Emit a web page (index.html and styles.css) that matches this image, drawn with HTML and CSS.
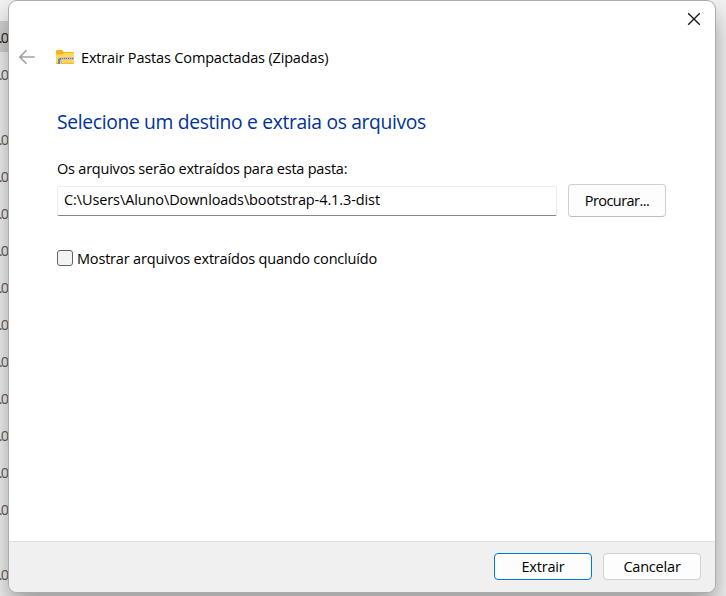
FILE: index.html
```html
<!DOCTYPE html>
<html lang="pt-BR">
<head>
<meta charset="utf-8">
<title>Extrair Pastas Compactadas (Zipadas)</title>
<link rel="stylesheet" href="styles.css">
</head>
<body>
<div class="backdrop">
  <div class="row selected">.0</div>
  <div class="row group-end">.0</div>
  <div class="row">.0</div>
  <div class="row">.0</div>
  <div class="row">.0</div>
  <div class="row">.0</div>
  <div class="row">.0</div>
  <div class="row">.0</div>
  <div class="row">.0</div>
  <div class="row">.0</div>
  <div class="row">.0</div>
  <div class="row">.0</div>
  <div class="row group-end">.0</div>
  <div class="row">.0</div>
</div>
<main class="dialog">
  <div class="titlebar">
    <svg class="close" width="14" height="14" viewBox="0 0 14 14"><path d="M1.2 1.2L12.8 12.8M12.8 1.2L1.2 12.8"/></svg>
  </div>
  <header class="header">
    <svg class="back" width="16" height="16" viewBox="0 0 16 16"><path d="M15.7 8H1M7.5 1.3L.9 8l6.6 6.7"/></svg>
    <svg class="folder" width="18" height="14" viewBox="0 0 18 14">
      <path fill="#f5b517" d="M0 1.2Q0 0 1.2 0H6l2 2h9q1 0 1 1v4H0z"/>
      <path fill="#ffd75e" d="M0 4.5h6.3L8.3 3H18v10q0 1-1 1H1q-1 0-1-1z"/>
      <path fill="#f3bd36" d="M0 12.8h18V14H0z"/>
      <path fill="#c9c5b5" d="M3 7h15v3H6v4H2V8z"/>
      <path stroke="#66645b" stroke-dasharray="1 1" d="M6 8.5h12"/>
      <path fill="#85837b" d="M3 8h2v2H4v4H2V9h1z"/>
    </svg>
    <span class="name">Extrair Pastas Compactadas (Zipadas)</span>
  </header>
  <section class="content">
    <h1 class="heading">Selecione um destino e extraia os arquivos</h1>
    <div class="label">Os arquivos serão extraídos para esta pasta:</div>
    <div class="field">
      <div class="path"><span>C:\Users\Aluno\Downloads\bootstrap-4.1.3-dist</span></div>
      <button class="button browse">Procurar...</button>
    </div>
    <div class="option"><span class="checkbox"></span><span class="option-text">Mostrar arquivos extraídos quando concluído</span></div>
  </section>
  <footer class="footer">
    <button class="button primary">Extrair</button>
    <button class="button cancel">Cancelar</button>
  </footer>
</main>
</body>
</html>
```
FILE: styles.css
```css
* { box-sizing: border-box; }
body {
  margin: 0;
  width: 726px;
  height: 596px;
  overflow: hidden;
  background: #f3f3f3;
  color: #000;
  font: 15px/20px "Open Sans", "Noto Sans", sans-serif;
}
.backdrop {
  position: absolute;
  inset: 0;
  padding-top: 21px;
  overflow: hidden;
}
.row {
  display: flex;
  justify-content: flex-end;
  width: 9px;
  height: 31px;
  padding: 7px 1.8px 0 0;
  margin-bottom: 6px;
  color: #606060;
  font-size: 14.5px;
  letter-spacing: -1.8px;
}
.row.selected { background: #d2d2d2; color: #222; }
.row.group-end { margin-bottom: 34px; }
.dialog {
  position: relative;
  display: flex;
  flex-direction: column;
  width: 708px;
  height: 593px;
  margin-left: 8px;
  border: 1px solid #acacac;
  border-radius: 9px;
  background: #fff;
  box-shadow: 0 14px 26px rgba(0, 0, 0, .36);
  overflow: hidden;
}
.titlebar {
  display: flex;
  justify-content: flex-end;
  height: 36px;
  padding: 11px 14px 0 0;
}
.close { fill: none; stroke: #111; stroke-width: 1.3; }
.header {
  display: flex;
  align-items: center;
  height: 40px;
  padding-left: 10px;
}
.back { fill: none; stroke: #a0a0a0; stroke-width: 1.6; }
.folder { margin-left: 21px; }
.name { margin-left: 7px; padding-top: 2px; letter-spacing: -.16px; font-size: 14.5px; }
.content { flex: 1; padding: 31px 0 0 48px; }
.heading {
  margin: 0;
  color: #003399;
  font-size: 19.3px;
  font-weight: 400;
  line-height: 28px;
  letter-spacing: -.34px;
}
.label { margin-top: 23px; letter-spacing: -.22px; font-size: 14.5px; }
.field { display: flex; align-items: center; margin-top: 5px; }
.path {
  width: 500px;
  height: 30px;
  margin-right: 11px;
  padding: 3px 6px;
  border: 1px solid #ececec;
  border-bottom-color: #868686;
  border-radius: 2px;
  font-size: 14.5px;
  letter-spacing: -.1px;
  white-space: nowrap;
}
.button {
  width: 98px;
  height: 27px;
  padding: 0;
  border: 1px solid #d0d0d0;
  border-radius: 4px;
  background: #fdfdfd;
  color: #000;
  font: 14.5px/20px "Open Sans", "Noto Sans", sans-serif;
  letter-spacing: -.2px;
}
.browse { height: 33px; border-bottom-color: #bcbcbc; letter-spacing: -.55px; }
.option { display: flex; align-items: center; margin-top: 31px; }
.checkbox {
  width: 16px;
  height: 16px;
  margin-right: 4px;
  border: 1px solid #626262;
  border-radius: 3px;
  background: #f3f3f3;
}
.option-text { padding-top: 1px; margin-bottom: -1px; font-size: 14.5px; letter-spacing: -.18px; }
.footer {
  display: flex;
  justify-content: flex-end;
  gap: 11px;
  height: 51px;
  padding: 11px 14px 0 0;
  border-top: 1px solid #dfdfdf;
  background: #f0f0f0;
}
.primary { border-color: #0078d4; }
```
